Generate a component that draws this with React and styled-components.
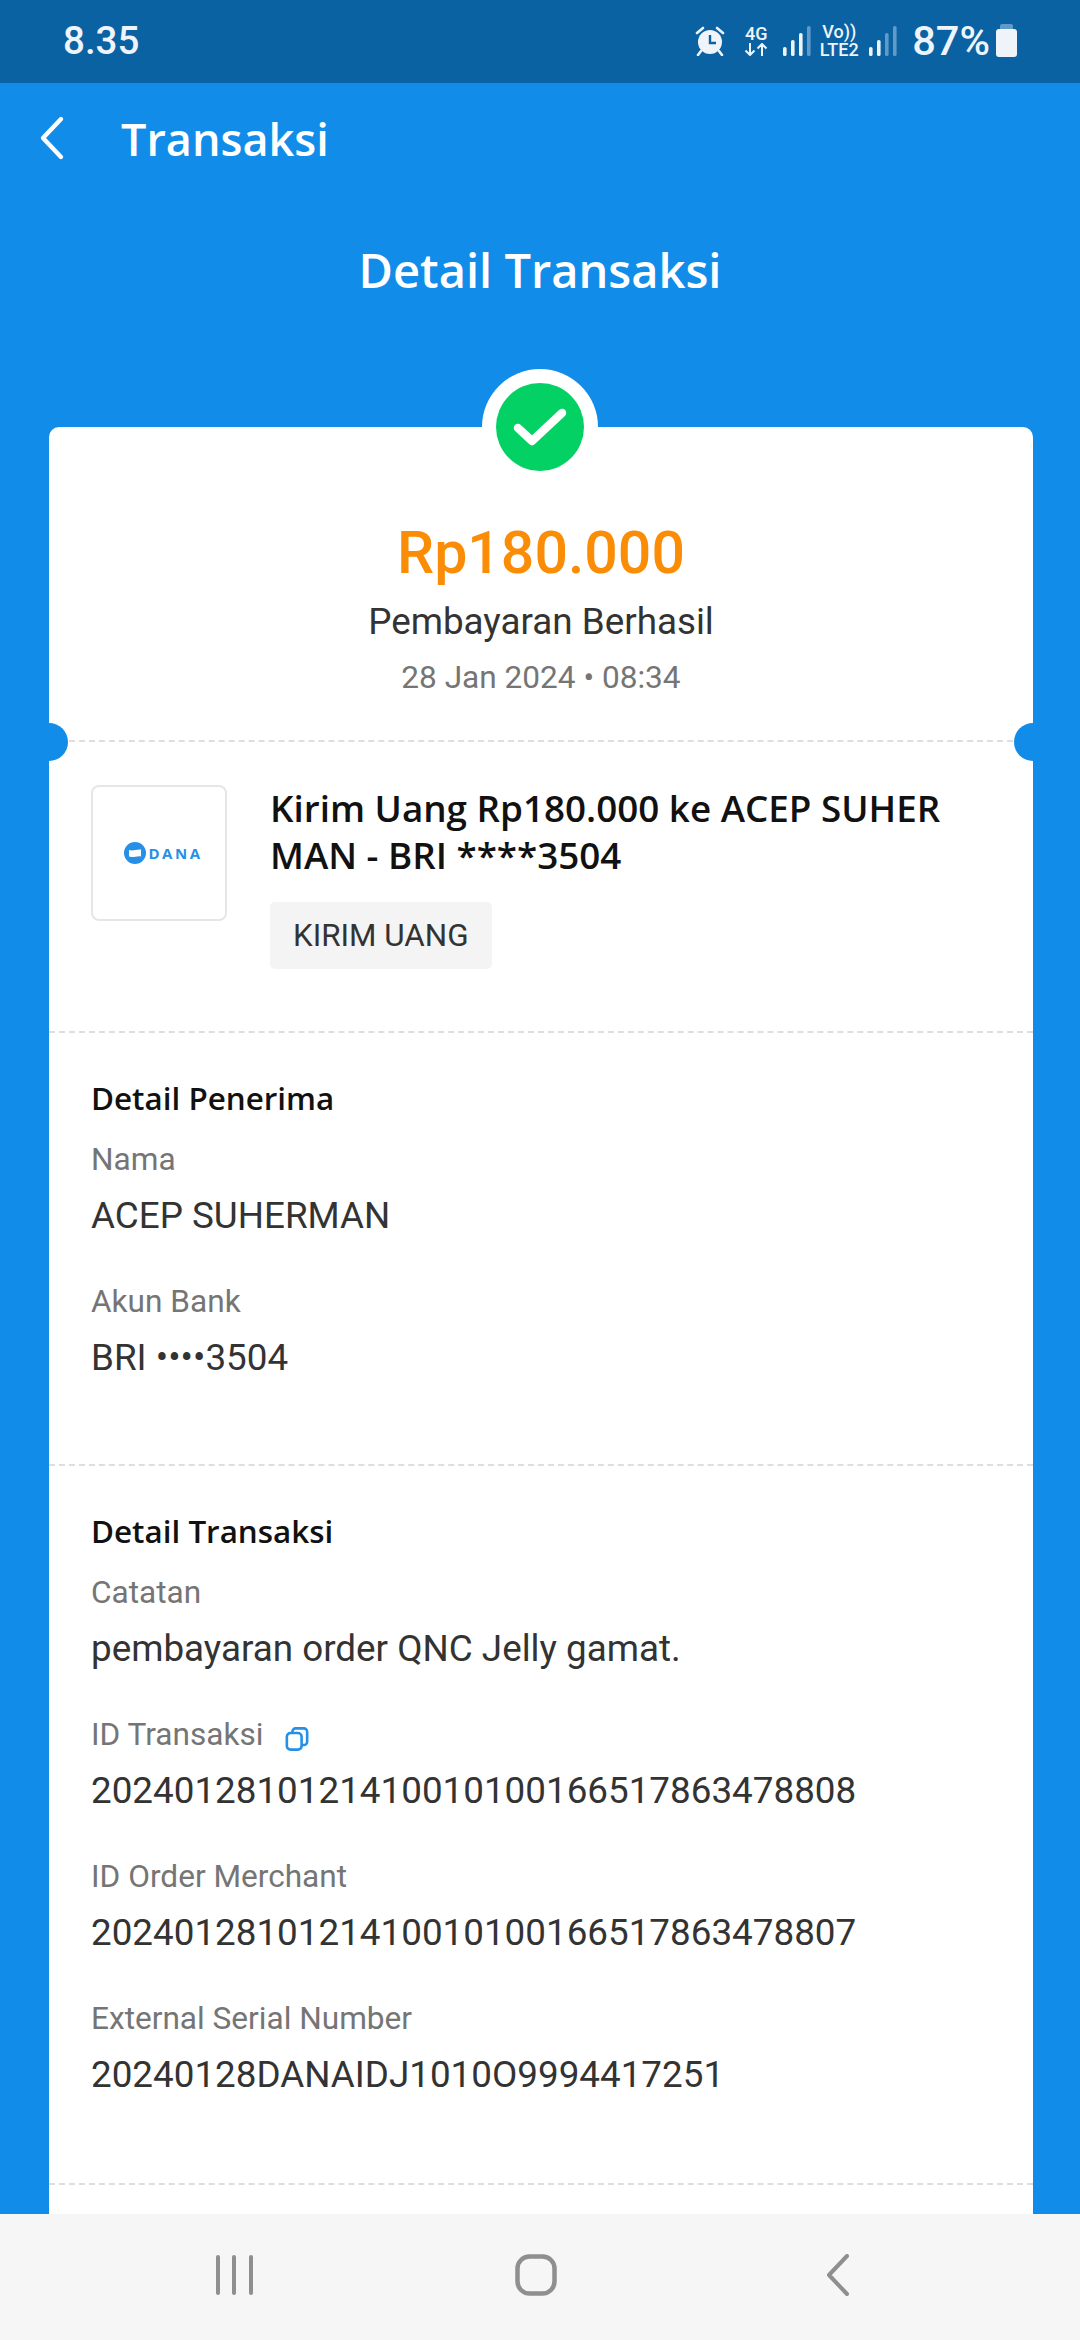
import React from 'react'
import styled, { createGlobalStyle } from 'styled-components'

const GlobalStyle = createGlobalStyle`
  html, body {
    margin: 0;
    padding: 0;
    background: #118de9;
  }
  * {
    box-sizing: border-box;
  }
`

const Page = styled.div`
  width: 1080px;
  height: 2340px;
  display: flex;
  flex-direction: column;
  overflow: hidden;
  background: #118de9;
  font-family: Roboto, "Liberation Sans", sans-serif;
`

const StatusBar = styled.div`
  height: 83px;
  flex: none;
  background: #0b62a3;
  color: #eef4f9;
  display: flex;
  align-items: center;
  justify-content: space-between;
  padding: 0 63px 2px 63px;
`

const Clock = styled.div`
  font-size: 38.5px;
  font-weight: 500;
`

const StatusIcons = styled.div`
  display: flex;
  align-items: center;
`

const NetStack = styled.div`
  display: flex;
  flex-direction: column;
  align-items: center;
  width: ${p => p.$w}px;
  margin: 0 ${p => p.$mr}px 0 ${p => p.$ml}px;
  font-size: 18px;
  font-weight: 500;
  line-height: 18px;
`

const Percent = styled.div`
  font-size: 41.5px;
  font-weight: 500;
  margin: 0 6px 0 15px;
`

const TopBar = styled.div`
  height: 110px;
  flex: none;
  display: flex;
  align-items: center;
  padding-left: 39px;
  color: #fff;
  font-family: "Open Sans", sans-serif;
`

const TopTitle = styled.div`
  font-size: 45px;
  font-weight: 600;
  margin-left: 54px;
`

const Heading = styled.div`
  height: 176px;
  flex: none;
  display: flex;
  align-items: flex-start;
  justify-content: center;
  color: #fff;
  font-family: "Open Sans", sans-serif;
  font-size: 47px;
  font-weight: 600;
  line-height: 60px;
  padding-top: 47px;
`

const Content = styled.div`
  flex: 1;
  min-height: 0;
  padding: 58px 47px 0 49px;
  overflow: hidden;
`

const Card = styled.div`
  position: relative;
  background: #fff;
  border-radius: 10px 10px 0 0;
  height: 1800px;
`

const BadgeRing = styled.div`
  position: absolute;
  top: -58px;
  left: 433px;
  width: 116px;
  height: 116px;
  border-radius: 50%;
  background: #fff;
  display: flex;
  align-items: center;
  justify-content: center;
`

const Badge = styled.div`
  width: 88px;
  height: 88px;
  border-radius: 50%;
  background: #04d164;
  display: flex;
  align-items: center;
  justify-content: center;
`

const Notch = styled.div`
  position: absolute;
  top: 296px;
  ${p => (p.$side === 'left' ? 'left: -19px;' : 'right: -19px;')}
  width: 38px;
  height: 38px;
  border-radius: 50%;
  background: #118de9;
`

const Summary = styled.div`
  height: 315px;
  padding-top: 92px;
  border-bottom: 2px dashed #dedede;
  text-align: center;
`

const Amount = styled.div`
  font-size: 59px;
  font-weight: 500;
  line-height: 68px;
  color: #fb8c05;
`

const StatusText = styled.div`
  font-size: 36.8px;
  line-height: 44px;
  margin-top: 13px;
  color: #333;
`

const DateText = styled.div`
  font-size: 31.6px;
  line-height: 40px;
  margin-top: 14px;
  color: #757575;
`

const Merchant = styled.div`
  height: 291px;
  display: flex;
  padding: 43px 42px 0 42px;
  border-bottom: 2px dashed #dedede;
`

const LogoBox = styled.div`
  width: 136px;
  height: 136px;
  flex: none;
  border: 2px solid #e6e6e6;
  border-radius: 8px;
  display: flex;
  align-items: center;
  justify-content: center;
  gap: 3px;
  padding-left: 5px;
`

const LogoText = styled.span`
  font-family: "Open Sans", sans-serif;
  font-size: 15px;
  font-weight: 700;
  letter-spacing: 2.5px;
  margin-right: -3px;
  color: #2690e6;
`

const MerchantInfo = styled.div`
  margin-left: 43px;
`

const MerchantTitle = styled.div`
  font-family: "Open Sans", sans-serif;
  font-size: 36.8px;
  font-weight: 600;
  line-height: 47px;
  color: #111;
  white-space: nowrap;
`

const Chip = styled.div`
  display: inline-block;
  margin-top: 23px;
  height: 67px;
  line-height: 67px;
  padding: 0 23px;
  background: #f4f4f4;
  border-radius: 5px;
  font-size: 31.4px;
  color: #333;
`

const Section = styled.div`
  height: ${p => p.$h}px;
  padding: 43px 42px 0 42px;
  border-bottom: 2px dashed #dedede;
`

const SectionTitle = styled.div`
  font-family: "Open Sans", sans-serif;
  font-size: 31.4px;
  font-weight: 600;
  line-height: 44px;
  color: #111;
`

const Field = styled.div`
  margin-top: ${p => (p.$first ? 20 : 43)}px;
`

const Label = styled.div`
  display: flex;
  align-items: center;
  font-size: 31.6px;
  line-height: 40px;
  color: #757575;
`

const CopyIcon = styled.svg`
  width: 24px;
  height: 24px;
  margin-left: 22px;
  margin-top: 8px;
`

const Value = styled.div`
  font-size: 36.8px;
  line-height: 46px;
  margin-top: 13px;
  color: #333;
`

const NavBar = styled.div`
  height: 126px;
  flex: none;
  background: #f5f6f5;
  display: flex;
  align-items: center;
  padding-bottom: 4px;
`

const NavSlot = styled.div`
  display: flex;
  margin-left: ${p => p.$ml}px;
`

const Signal = ({ off }) => (
  <svg width="28" height="30" viewBox="0 0 28 30">
    <rect x="0" y="21" width="3.6" height="9" rx="1.6" fill="#eef4f9" />
    <rect x="8" y="14" width="3.6" height="16" rx="1.6" fill="#eef4f9" />
    <rect x="16" y="7" width="3.6" height="23" rx="1.6" fill={off > 1 ? '#5f9ac8' : '#eef4f9'} />
    <rect x="24" y="0" width="3.6" height="30" rx="1.6" fill="#5f9ac8" />
  </svg>
)

const Alarm = () => (
  <svg width="30" height="30" viewBox="0 0 30 30">
    <circle cx="15" cy="16" r="12" fill="#eef4f9" />
    <path d="M15 9v8h6" fill="none" stroke="#0b62a3" strokeWidth="2.4" />
    <path d="M2 7l6-5M28 7l-6-5M6 25l-3 4M24 25l3 4" fill="none" stroke="#eef4f9" strokeWidth="2.6" strokeLinecap="round" />
  </svg>
)

const Arrows = () => (
  <svg width="24" height="13" viewBox="0 0 24 13">
    <path d="M6 0v12M1.5 7.5L6 12l4.5-4.5M18 13V1M13.5 5.5L18 1l4.5 4.5" fill="none" stroke="#eef4f9" strokeWidth="2" />
  </svg>
)

const Battery = () => (
  <svg width="21" height="33" viewBox="0 0 21 33">
    <path d="M6 0h9a2 2 0 0 1 2 2v3H4V2a2 2 0 0 1 2-2z" fill="#5f9ac8" />
    <path d="M3 5h15a3 3 0 0 1 3 3v22a3 3 0 0 1-3 3H3a3 3 0 0 1-3-3V8a3 3 0 0 1 3-3z" fill="#eef4f9" />
  </svg>
)

const Row = ({ first, label, value, copy }) => (
  <Field $first={first}>
    <Label>
      {label}
      {copy && (
        <CopyIcon viewBox="0 0 26 26" fill="none" stroke="#2690e6" strokeWidth="2.8">
          <rect x="2" y="6.5" width="16" height="18" rx="4" />
          <path d="M8 6.5V5a3.5 3.5 0 0 1 3.5-3.5h9A3.5 3.5 0 0 1 24 5v11a3.5 3.5 0 0 1-3.5 3.5H18" />
        </CopyIcon>
      )}
    </Label>
    <Value>{value}</Value>
  </Field>
)

const App = () => {
  return (
    <Page>
      <GlobalStyle />
      <StatusBar>
        <Clock>8.35</Clock>
        <StatusIcons>
          <Alarm />
          <NetStack $w={26} $ml={18} $mr={14}>
            <span>4G</span>
            <Arrows />
          </NetStack>
          <Signal off={1} />
          <NetStack $w={42} $ml={7} $mr={9}>
            <span>Vo))</span>
            <span>LTE2</span>
          </NetStack>
          <Signal off={2} />
          <Percent>87%</Percent>
          <Battery />
        </StatusIcons>
      </StatusBar>

      <TopBar>
        <svg width="28" height="46" viewBox="0 0 28 46">
          <path d="M22 4L4 23l18 19" fill="none" stroke="#fff" strokeWidth="4.4" strokeLinecap="round" strokeLinejoin="round" />
        </svg>
        <TopTitle>Transaksi</TopTitle>
      </TopBar>

      <Heading>Detail Transaksi</Heading>

      <Content>
        <Card>
          <BadgeRing>
            <Badge>
              <svg width="54" height="38" viewBox="0 0 54 38">
                <path d="M5 20l14 13L49 5" fill="none" stroke="#fff" strokeWidth="8.5" strokeLinecap="round" strokeLinejoin="round" />
              </svg>
            </Badge>
          </BadgeRing>
          <Notch $side="left" />
          <Notch $side="right" />

          <Summary>
            <Amount>Rp180.000</Amount>
            <StatusText>Pembayaran Berhasil</StatusText>
            <DateText>28 Jan 2024 • 08:34</DateText>
          </Summary>

          <Merchant>
            <LogoBox>
              <svg width="22" height="22" viewBox="0 0 22 22">
                <circle cx="11" cy="11" r="11" fill="#2690e6" />
                <path d="M5 8c4 1.4 8-1 12-.4v6.8c-4-.8-8 1.6-12 .2z" fill="#fff" />
              </svg>
              <LogoText>DANA</LogoText>
            </LogoBox>
            <MerchantInfo>
              <MerchantTitle>Kirim Uang Rp180.000 ke ACEP SUHER<br />MAN - BRI ****3504</MerchantTitle>
              <Chip>KIRIM UANG</Chip>
            </MerchantInfo>
          </Merchant>

          <Section $h={433}>
            <SectionTitle>Detail Penerima</SectionTitle>
            <Row first label="Nama" value="ACEP SUHERMAN" />
            <Row label="Akun Bank" value="BRI ••••3504" />
          </Section>

          <Section $h={719}>
            <SectionTitle>Detail Transaksi</SectionTitle>
            <Row first label="Catatan" value="pembayaran order QNC Jelly gamat." />
            <Row copy label="ID Transaksi" value="2024012810121410010100166517863478808" />
            <Row label="ID Order Merchant" value="2024012810121410010100166517863478807" />
            <Row label="External Serial Number" value="20240128DANAIDJ1010O9994417251" />
          </Section>
        </Card>
      </Content>

      <NavBar>
        <NavSlot $ml={216}>
          <svg width="37" height="40" viewBox="0 0 37 40" fill="#8f8f8f">
            <rect x="0" y="0" width="4" height="40" rx="2" />
            <rect x="16" y="0" width="4" height="40" rx="2" />
            <rect x="33" y="0" width="4" height="40" rx="2" />
          </svg>
        </NavSlot>
        <NavSlot $ml={262}>
          <svg width="42" height="42" viewBox="0 0 42 42">
            <rect x="2.5" y="2.5" width="37" height="37" rx="12" fill="none" stroke="#8f8f8f" strokeWidth="4.5" />
          </svg>
        </NavSlot>
        <NavSlot $ml={269}>
          <svg width="24" height="42" viewBox="0 0 24 42">
            <path d="M21 2L3 21l18 19" fill="none" stroke="#8f8f8f" strokeWidth="4" strokeLinecap="round" strokeLinejoin="round" />
          </svg>
        </NavSlot>
      </NavBar>
    </Page>
  )
}

export default App
